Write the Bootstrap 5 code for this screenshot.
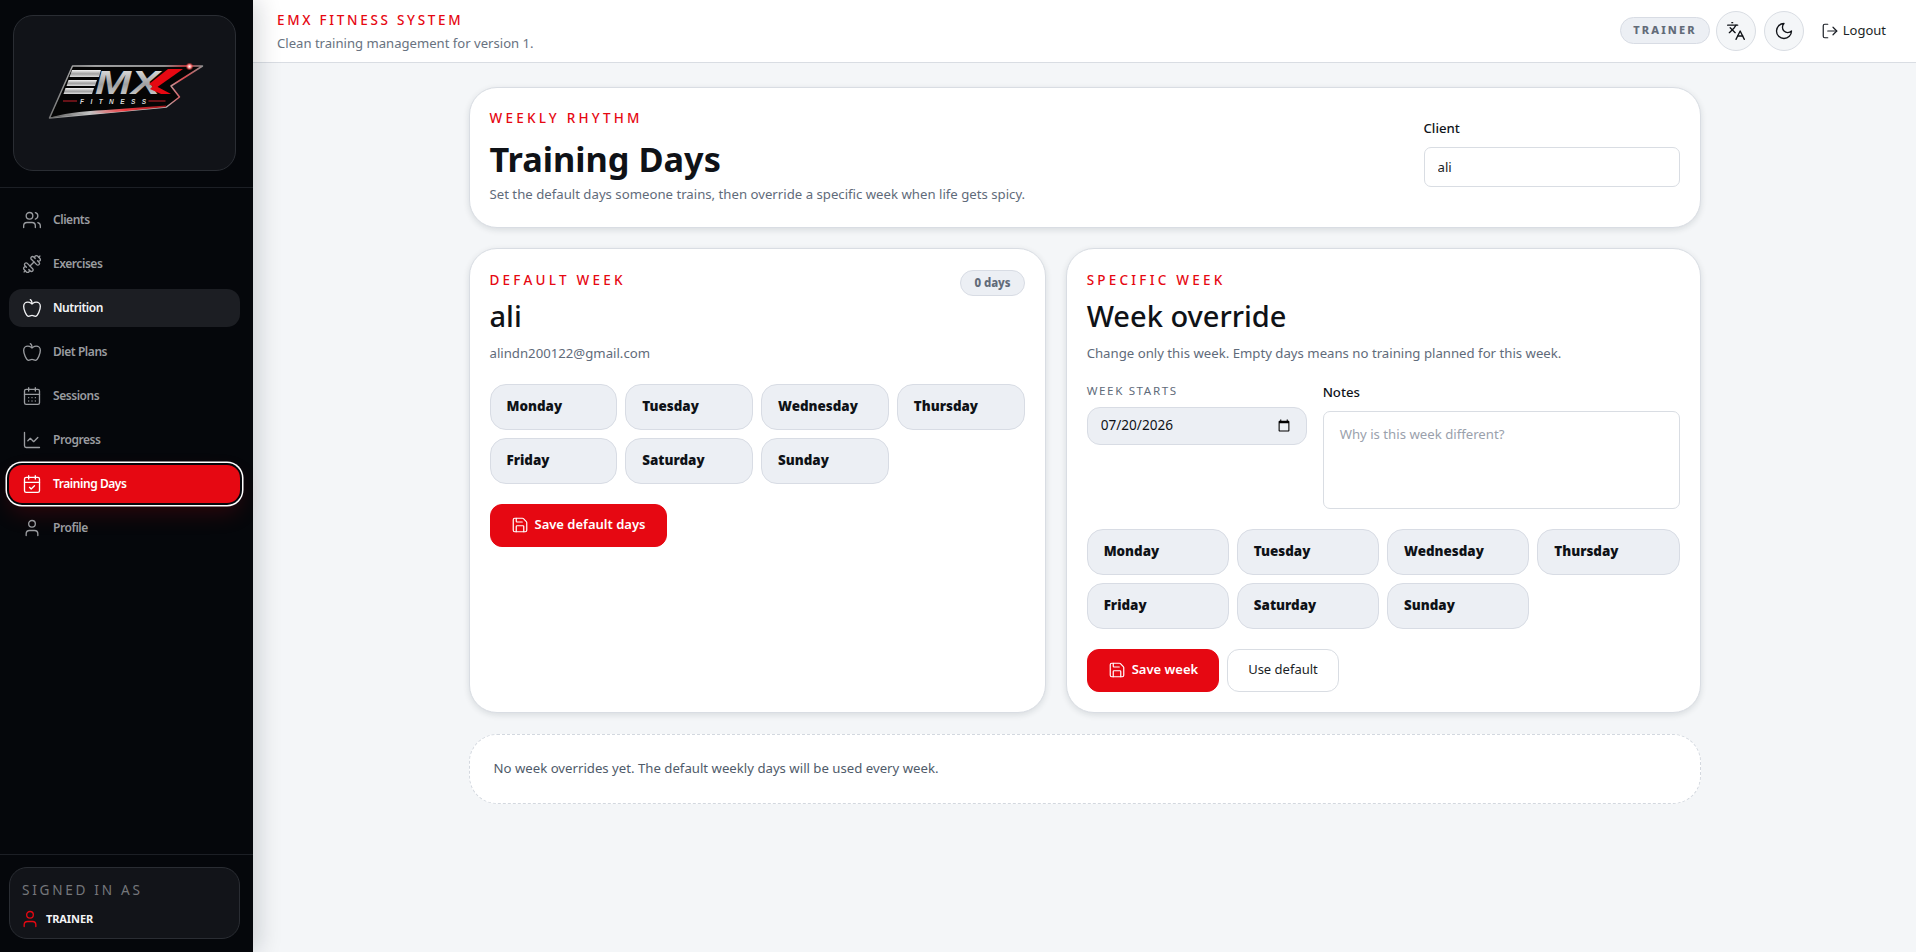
<!DOCTYPE html>
<html lang="en">
<head>
<meta charset="utf-8">
<title>Training Days</title>
<link href="https://cdn.jsdelivr.net/npm/bootstrap@5.3.0/dist/css/bootstrap.min.css" rel="stylesheet">
<style>
html,body{height:100%;}
body{font-family:"Noto Sans","Open Sans","Liberation Sans",sans-serif;background:#f4f6f8;color:#0f1217;overflow:hidden;}
.ico{width:20px;height:20px;fill:none;stroke:currentColor;stroke-width:1.6;stroke-linecap:round;stroke-linejoin:round;flex:none;}
.shell{height:952px;}
.side{width:253px;flex:none;background:#05070b;box-shadow:6px 0 22px rgba(15,20,30,.16);position:relative;z-index:2;}
.logo-wrap{padding:15px 17px 16px 13px;border-bottom:1px solid #1c1f25;}
.logo-box{height:156px;background:#111318;border:1px solid #2a2d33;border-radius:20px;}
.side-nav{padding:13px 13px 0 9px;gap:6px;}
.side-link{height:38px;border-radius:13px;padding:0 13px;gap:11px;color:#9a9ca0;font-size:12px;letter-spacing:-.45px;font-weight:600;text-decoration:none;}
.side-link.is-hover{background:#1c1e23;color:#f2f3f5;}
.side-link.is-on{background:#e60812;color:#fff;box-shadow:0 0 0 2px #05070b,0 0 0 3.5px #fff,0 10px 22px rgba(230,8,18,.18);}
.side-foot{border-top:1px solid #1c1f25;padding:12px 13px 13px 9px;}
.who{height:72px;background:#121419;border:1px solid #2a2d33;border-radius:18px;padding:13px 12px;}
.who-t{color:#75777b;font-size:13.6px;letter-spacing:.2em;line-height:18px;}
.who-r{color:#f3f3f5;font-size:11px;letter-spacing:-.1px;font-weight:700;gap:6px;margin-top:10px;}
.who-r .ico{color:#e60812;margin-left:-2px;}
.top{height:63px;background:#fff;border-bottom:1px solid #d9dde3;padding:0 30px 0 24px;flex:none;}
.brand-t{color:#e60812;font-size:13.5px;letter-spacing:.2em;font-weight:500;line-height:18px;}
.brand-s{color:#687280;font-size:13.1px;line-height:18px;margin-top:5px;}
.pill{background:#eceff4;border:1px solid #d8dce4;color:#626b79;font-weight:800;border-radius:99px;}
.pill-role{font-size:11px;letter-spacing:.195em;height:27px;padding:0 12px;margin:-2px -2px 0 0;}
.round{width:40px;height:40px;border-radius:50%;border:1px solid #d9dde3;background:#f4f6f8;color:#0f1217;padding:0;}
.logout{font-size:13px;color:#1b1f26;padding:0;border:0;gap:4px;margin-left:9px;}
.logout .ico{width:18px;height:18px;}
.wrap{width:1232px;margin:24px auto 0;}
.panel{background:#fff;border:1px solid #d9dde3;border-radius:28px;box-shadow:0 2px 6px rgba(20,30,45,.12);padding:20px;}
.hero{height:141px;}
.hero .eyebrow{margin-top:1px;}
.eyebrow{color:#e60812;font-size:13.5px;letter-spacing:.24em;line-height:18px;font-weight:500;}
.twin .eyebrow{margin-top:2px;}
.hero h1{font-size:34.3px;font-weight:700;line-height:44px;margin:10px 0 4px;}
.muted-t{color:#5f6b7a;font-size:13.2px;line-height:18px;}
.client{width:256px;margin-top:11px;}
.lbl{font-size:13.2px;font-weight:500;line-height:18px;margin-bottom:10px;color:#10141a;}
.note-lbl{margin-top:1px;}
.fld{border:1px solid #d9dde3;border-radius:7px;height:40px;font-size:13.2px;color:#1a1e25;padding:0 13px;box-shadow:none;}
.grid-two{display:grid;grid-template-columns:1fr 1.1fr;gap:20px;margin-top:20px;}
.twin{height:465px;}
.nm{font-size:29px;line-height:38px;font-weight:500;margin:8px 0 8.500px;}
.days{display:grid;grid-template-columns:repeat(4,1fr);gap:8px;margin-top:22px;}
.dy{height:46px;background:#eceff4;border:1px solid #d8dce4;border-radius:16px;padding:0 16px;font-size:13.4px;font-weight:900;color:#0f1217;display:flex;align-items:center;}
.pill-days{font-size:11.4px;height:26px;padding:0 13px;position:absolute;top:21px;right:20px;}
.act{height:43px;border-radius:12px;font-size:13px;font-weight:600;padding:0 21px 0 20px;gap:6px;}
.act-red{background:#e60812;color:#fff;border:1px solid #e60812;}
.act-red:hover{background:#e60812;color:#fff;}
.act-red .ico{width:18px;height:18px;}
.act-tight{padding-right:20px;}
.act-plain{background:#fff;border:1px solid #d9dde3;color:#1a1e25;font-weight:400;padding:0 20px;}
.act-row{margin-top:20px;}
.wk-row{display:grid;grid-template-columns:220px 1fr;gap:16px;margin-top:20px;}
.wk-lbl{color:#5f6b7a;font-size:11.6px;letter-spacing:.14em;line-height:18px;margin-bottom:7px;}
.dt{background:#eceff4;border:1px solid #d8dce4;border-radius:13px;height:38px;font-size:13.6px;padding:0 13px;color:#0f1217;}
.note{border:1px solid #d9dde3;border-radius:7px;height:98px;font-size:13.2px;padding:13px 16px;resize:none;box-shadow:none;}
.note::placeholder{color:#9aa1ac;}
.note-days{margin-top:20px;}
.empty{height:70px;margin-top:21px;background:#fff;border:1px dashed #d3d8df;border-radius:28px;padding:0 24px;color:#4f5b6a;font-size:13.2px;}
</style>
</head>
<body>
<svg width="0" height="0" class="position-absolute">
<defs>
<symbol id="i-users" viewBox="0 0 24 24"><path d="M16 21v-2a4 4 0 0 0-4-4H6a4 4 0 0 0-4 4v2"/><circle cx="9" cy="7" r="4"/><path d="M22 21v-2a4 4 0 0 0-3-3.87"/><path d="M16 3.13a4 4 0 0 1 0 7.75"/></symbol>
<symbol id="i-dumb" viewBox="0 0 24 24"><g transform="matrix(-1 0 0 1 24 0)"><path d="M14.4 14.4 9.6 9.6"/><path d="M18.657 21.485a2 2 0 1 1-2.829-2.828l-1.767 1.768a2 2 0 1 1-2.829-2.829l6.364-6.364a2 2 0 1 1 2.829 2.829l-1.768 1.767a2 2 0 1 1 2.828 2.829z"/><path d="m21.5 21.5-1.4-1.4"/><path d="M3.9 3.9 2.5 2.5"/><path d="M6.404 12.768a2 2 0 1 1-2.829-2.829l1.768-1.767a2 2 0 1 1-2.828-2.829l2.828-2.828a2 2 0 1 1 2.829 2.828l1.767-1.768a2 2 0 1 1 2.829 2.829z"/></g></symbol>
<symbol id="i-apple" viewBox="0 0 24 24"><path d="M12 20.94c1.5 0 2.75 1.06 4 1.06 3 0 6-8 6-12.22A4.91 4.91 0 0 0 17 5c-2.22 0-4 1.44-5 2-1-.56-2.78-2-5-2a4.9 4.9 0 0 0-5 4.78C2 14 5 22 8 22c1.25 0 2.5-1.06 4-1.06Z"/><path d="M10 2c1 .5 2 2 2 5"/></symbol>
<symbol id="i-cal" viewBox="0 0 24 24"><path d="M8 2v4"/><path d="M16 2v4"/><rect width="18" height="18" x="3" y="4" rx="2"/><path d="M3 10h18"/><path d="M8 14h.01"/><path d="M12 14h.01"/><path d="M16 14h.01"/><path d="M8 18h.01"/><path d="M12 18h.01"/><path d="M16 18h.01"/></symbol>
<symbol id="i-chart" viewBox="0 0 24 24"><path d="M3 3v16a2 2 0 0 0 2 2h16"/><path d="m19 9-5 5-4-4-3 3"/></symbol>
<symbol id="i-check" viewBox="0 0 24 24"><path d="M8 2v4"/><path d="M16 2v4"/><rect width="18" height="18" x="3" y="4" rx="2"/><path d="M3 10h18"/><path d="m9 16 2 2 4-4"/></symbol>
<symbol id="i-user" viewBox="0 0 24 24"><path d="M19 21v-2a4 4 0 0 0-4-4H9a4 4 0 0 0-4 4v2"/><circle cx="12" cy="7" r="4"/></symbol>
<symbol id="i-lang" viewBox="0 0 24 24"><path d="m5 8 6 6"/><path d="m4 14 6-6 2-3"/><path d="M2 5h12"/><path d="M7 2h1"/><path d="m22 22-5-10-5 10"/><path d="M14 18h6"/></symbol>
<symbol id="i-moon" viewBox="0 0 24 24"><path d="M12 3a6 6 0 0 0 9 9 9 9 0 1 1-9-9Z"/></symbol>
<symbol id="i-out" viewBox="0 0 24 24"><path d="M9 21H5a2 2 0 0 1-2-2V5a2 2 0 0 1 2-2h4"/><path d="m16 17 5-5-5-5"/><path d="M21 12H9"/></symbol>
<symbol id="i-save" viewBox="0 0 24 24"><path d="M15.2 3a2 2 0 0 1 1.4.6l3.8 3.8a2 2 0 0 1 .6 1.4V19a2 2 0 0 1-2 2H5a2 2 0 0 1-2-2V5a2 2 0 0 1 2-2z"/><path d="M17 21v-7a1 1 0 0 0-1-1H8a1 1 0 0 0-1 1v7"/><path d="M7 3v4a1 1 0 0 0 1 1h7"/></symbol>
<linearGradient id="steel" x1="0" y1="0" x2="0" y2="1"><stop offset="0" stop-color="#f4f4f4"/><stop offset=".55" stop-color="#a0a0a0"/><stop offset="1" stop-color="#dcdcdc"/></linearGradient>
<linearGradient id="edge" x1="0" y1="0" x2="1" y2="0"><stop offset="0" stop-color="#777"/><stop offset=".3" stop-color="#cfcfcf"/><stop offset=".75" stop-color="#b9b9b9"/><stop offset=".88" stop-color="#e0484e"/><stop offset="1" stop-color="#8f8f8f"/></linearGradient>
<linearGradient id="swoosh" x1="0" y1="0" x2="1" y2="0"><stop offset="0" stop-color="#555"/><stop offset=".35" stop-color="#c4c4c4"/><stop offset=".65" stop-color="#f03a3f"/><stop offset="1" stop-color="#9c1218"/></linearGradient>
<radialGradient id="spark"><stop offset="0" stop-color="#fff"/><stop offset=".45" stop-color="#ff8a8a"/><stop offset="1" stop-color="#ff2020" stop-opacity="0"/></radialGradient>
</defs>
</svg>
<div class="shell d-flex">
  <aside class="side d-flex flex-column">
    <div class="logo-wrap">
      <div class="logo-box d-flex align-items-center justify-content-center">
        <svg width="158" height="64" viewBox="0 -4 158 64" aria-label="EMX Fitness">
          <polygon points="26.500,1 156.500,1 125,21 133.500,32 120.500,42 3.500,53" fill="#050505" stroke="url(#edge)" stroke-width="1.500" stroke-linejoin="round"/>
          <polygon points="26,5 55,5 53,12 23.500,12" fill="url(#steel)"/>
          <polygon points="22.500,15 51,15 49,21 20.500,21" fill="url(#steel)"/>
          <polygon points="19.500,23 48,23 46,29 17.500,29" fill="url(#steel)"/>
          <text x="49" y="29" font-family="Liberation Sans, sans-serif" font-size="33" font-weight="700" font-style="italic" fill="url(#steel)" textLength="65" lengthAdjust="spacingAndGlyphs">MX</text>
          <polygon points="137,4 122,4 103,19 110,23" fill="#e60812"/>
          <polygon points="108,20 125,29 115,29 104,24" fill="#e60812"/>
          <text x="67" y="39" text-anchor="middle" font-family="Liberation Sans, sans-serif" font-size="6.500" font-weight="700" font-style="italic" fill="#d9d9d9" textLength="66">FITNESS</text>
          <path d="M17 36h14M102.500 36h17" stroke="#c8202a" stroke-width="1"/>
          <path d="M3.500 53Q20 47 60 45L120 40.500V42L60 48Q25 50 3.500 53Z" fill="url(#swoosh)"/>
          <circle cx="143.500" cy="1.500" r="4" fill="url(#spark)"/>
        </svg>
      </div>
    </div>
    <nav class="side-nav d-flex flex-column flex-grow-1">
      <a href="#" class="side-link d-flex align-items-center"><svg class="ico"><use href="#i-users"/></svg>Clients</a>
      <a href="#" class="side-link d-flex align-items-center"><svg class="ico"><use href="#i-dumb"/></svg>Exercises</a>
      <a href="#" class="side-link is-hover d-flex align-items-center"><svg class="ico"><use href="#i-apple"/></svg>Nutrition</a>
      <a href="#" class="side-link d-flex align-items-center"><svg class="ico"><use href="#i-apple"/></svg>Diet Plans</a>
      <a href="#" class="side-link d-flex align-items-center"><svg class="ico"><use href="#i-cal"/></svg>Sessions</a>
      <a href="#" class="side-link d-flex align-items-center"><svg class="ico"><use href="#i-chart"/></svg>Progress</a>
      <a href="#" class="side-link is-on d-flex align-items-center"><svg class="ico"><use href="#i-check"/></svg>Training Days</a>
      <a href="#" class="side-link d-flex align-items-center"><svg class="ico"><use href="#i-user"/></svg>Profile</a>
    </nav>
    <div class="side-foot">
      <div class="who">
        <div class="who-t">SIGNED IN AS</div>
        <div class="who-r d-flex align-items-center"><svg class="ico"><use href="#i-user"/></svg>TRAINER</div>
      </div>
    </div>
  </aside>
  <div class="flex-grow-1 d-flex flex-column min-w-0">
    <header class="top d-flex align-items-center justify-content-between">
      <div>
        <div class="brand-t">EMX FITNESS SYSTEM</div>
        <div class="brand-s">Clean training management for version 1.</div>
      </div>
      <div class="d-flex align-items-center gap-2">
        <span class="pill pill-role d-inline-flex align-items-center">TRAINER</span>
        <button class="btn round d-flex align-items-center justify-content-center"><svg class="ico"><use href="#i-lang"/></svg></button>
        <button class="btn round d-flex align-items-center justify-content-center"><svg class="ico"><use href="#i-moon"/></svg></button>
        <button class="btn logout d-flex align-items-center"><svg class="ico"><use href="#i-out"/></svg>Logout</button>
      </div>
    </header>
    <main class="wrap">
      <section class="panel hero d-flex justify-content-between">
        <div>
          <div class="eyebrow">WEEKLY RHYTHM</div>
          <h1>Training Days</h1>
          <div class="muted-t">Set the default days someone trains, then override a specific week when life gets spicy.</div>
        </div>
        <div class="client">
          <div class="lbl">Client</div>
          <input class="form-control fld" value="ali">
        </div>
      </section>
      <div class="grid-two">
        <section class="panel twin position-relative">
          <div class="eyebrow">DEFAULT WEEK</div>
          <span class="pill pill-days d-inline-flex align-items-center">0 days</span>
          <div class="nm">ali</div>
          <div class="muted-t">alindn200122@gmail.com</div>
          <div class="days">
            <div class="dy">Monday</div><div class="dy">Tuesday</div><div class="dy">Wednesday</div><div class="dy">Thursday</div>
            <div class="dy">Friday</div><div class="dy">Saturday</div><div class="dy">Sunday</div>
          </div>
          <div class="act-row">
            <button class="btn act act-red d-inline-flex align-items-center"><svg class="ico"><use href="#i-save"/></svg>Save default days</button>
          </div>
        </section>
        <section class="panel twin">
          <div class="eyebrow">SPECIFIC WEEK</div>
          <div class="nm">Week override</div>
          <div class="muted-t">Change only this week. Empty days means no training planned for this week.</div>
          <div class="wk-row">
            <div>
              <div class="wk-lbl">WEEK STARTS</div>
              <input type="date" class="form-control dt" value="2026-07-20">
            </div>
            <div>
              <div class="lbl note-lbl">Notes</div>
              <textarea class="form-control note" placeholder="Why is this week different?"></textarea>
            </div>
          </div>
          <div class="days note-days">
            <div class="dy">Monday</div><div class="dy">Tuesday</div><div class="dy">Wednesday</div><div class="dy">Thursday</div>
            <div class="dy">Friday</div><div class="dy">Saturday</div><div class="dy">Sunday</div>
          </div>
          <div class="act-row d-flex gap-2">
            <button class="btn act act-red act-tight d-inline-flex align-items-center"><svg class="ico"><use href="#i-save"/></svg>Save week</button>
            <button class="btn act act-plain d-inline-flex align-items-center">Use default</button>
          </div>
        </section>
      </div>
      <div class="empty d-flex align-items-center">No week overrides yet. The default weekly days will be used every week.</div>
    </main>
  </div>
</div>
<script src="https://cdn.jsdelivr.net/npm/bootstrap@5.3.0/dist/js/bootstrap.bundle.min.js"></script>
</body>
</html>
